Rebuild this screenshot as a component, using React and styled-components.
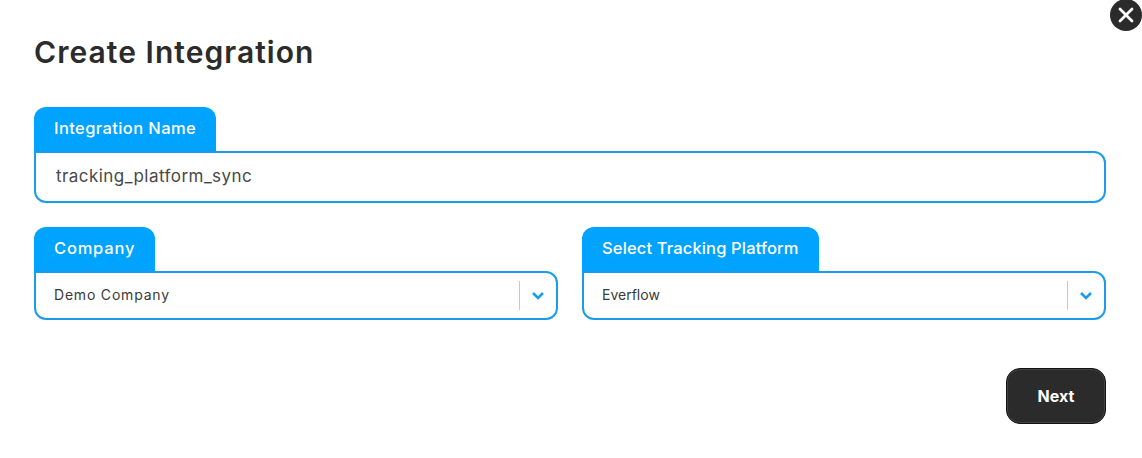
import React from 'react';
import styled, { createGlobalStyle } from 'styled-components';

const GlobalStyle = createGlobalStyle`
    html, body {
        margin: 0;
        padding: 0;
        background: #fff;
    }
    body {
        font-family: Inter, "Liberation Sans", sans-serif;
    }
`;

const Modal = styled.div`
    position: relative;
    box-sizing: border-box;
    width: 1142px;
    height: 458px;
    padding: 33px 36px 0 34px;
    background: #fff;
`;

const CloseButton = styled.button`
    position: absolute;
    top: -1px;
    right: 0;
    width: 32px;
    height: 32px;
    padding: 0;
    display: flex;
    align-items: center;
    justify-content: center;
    border: none;
    border-radius: 50%;
    background: #2b2b2b;
`;

const Title = styled.h1`
    margin: 0 0 35px;
    height: 39px;
    font-size: 30px;
    line-height: 39px;
    font-weight: 600;
    letter-spacing: 1.05px;
    color: #2b2b2b;
`;

const Field = styled.div`
    display: flex;
    flex-direction: column;
    align-items: flex-start;
    flex: 1;
    min-width: 0;
`;

const Tab = styled.label`
    box-sizing: border-box;
    height: 45px;
    margin-bottom: -1px;
    padding: 0 20px 4px;
    display: flex;
    align-items: center;
    border-radius: 12px 12px 0 0;
    background: #00a3ff;
    color: #fff;
    font-size: 16.5px;
    font-weight: 500;
    letter-spacing: ${props => props.$tracking}px;
`;

const TextBox = styled.div`
    box-sizing: border-box;
    width: 100%;
    height: 52px;
    padding: 0 20px 2px;
    display: flex;
    align-items: center;
    border: 2px solid #1b9ce8;
    border-radius: 0 12px 12px 12px;
    color: #484848;
    font-size: 17px;
    letter-spacing: 0.45px;
`;

const Row = styled.div`
    display: flex;
    gap: 24px;
    margin-top: 24px;
`;

const SelectBox = styled.div`
    box-sizing: border-box;
    width: 100%;
    height: 49px;
    padding-left: 18px;
    display: flex;
    align-items: center;
    border: 2px solid #1b9ce8;
    border-radius: 0 12px 12px 12px;
    color: #3a3a3a;
    font-size: 14px;
`;

const SelectValue = styled.span`
    flex: 1;
    padding-bottom: 2px;
    letter-spacing: ${props => props.$tracking}px;
`;

const Divider = styled.span`
    width: 1px;
    height: 29px;
    background: #c8c8c8;
`;

const Chevron = styled.span`
    width: 36px;
    display: flex;
    align-items: center;
    justify-content: center;
`;

const Footer = styled.div`
    display: flex;
    justify-content: flex-end;
    margin-top: 48px;
`;

const NextButton = styled.button`
    box-sizing: border-box;
    width: 100px;
    height: 56px;
    border: 1px solid #111;
    border-radius: 14px;
    background: #2b2b2b;
    box-shadow: inset 0 0 0 1px #444;
    color: #fff;
    font-family: inherit;
    font-size: 16px;
    font-weight: 700;
`;

function SelectField({ label, labelTracking, value, valueTracking }) {
    return (
        <Field>
            <Tab $tracking={labelTracking}>{label}</Tab>
            <SelectBox>
                <SelectValue $tracking={valueTracking}>{value}</SelectValue>
                <Divider />
                <Chevron>
                    <svg width="14" height="9" viewBox="0 0 14 9" fill="none">
                        <path d="M2 2l5 5 5-5" stroke="#1b9ce8" strokeWidth="2.6" />
                    </svg>
                </Chevron>
            </SelectBox>
        </Field>
    );
}

export default function App() {
    return (
        <Modal>
            <GlobalStyle />
            <CloseButton aria-label="Close">
                <svg width="16" height="16" viewBox="0 0 16 16" fill="none">
                    <path d="M2 2l12 12M14 2L2 14" stroke="#fff" strokeWidth="2.8" strokeLinecap="round" />
                </svg>
            </CloseButton>
            <Title>Create Integration</Title>
            <Field>
                <Tab $tracking={0.4}>Integration Name</Tab>
                <TextBox>tracking_platform_sync</TextBox>
            </Field>
            <Row>
                <SelectField label="Company" labelTracking={0.8} value="Demo Company" valueTracking={0.8} />
                <SelectField label="Select Tracking Platform" labelTracking={0.15} value="Everflow" valueTracking={0} />
            </Row>
            <Footer>
                <NextButton>Next</NextButton>
            </Footer>
        </Modal>
    );
}
